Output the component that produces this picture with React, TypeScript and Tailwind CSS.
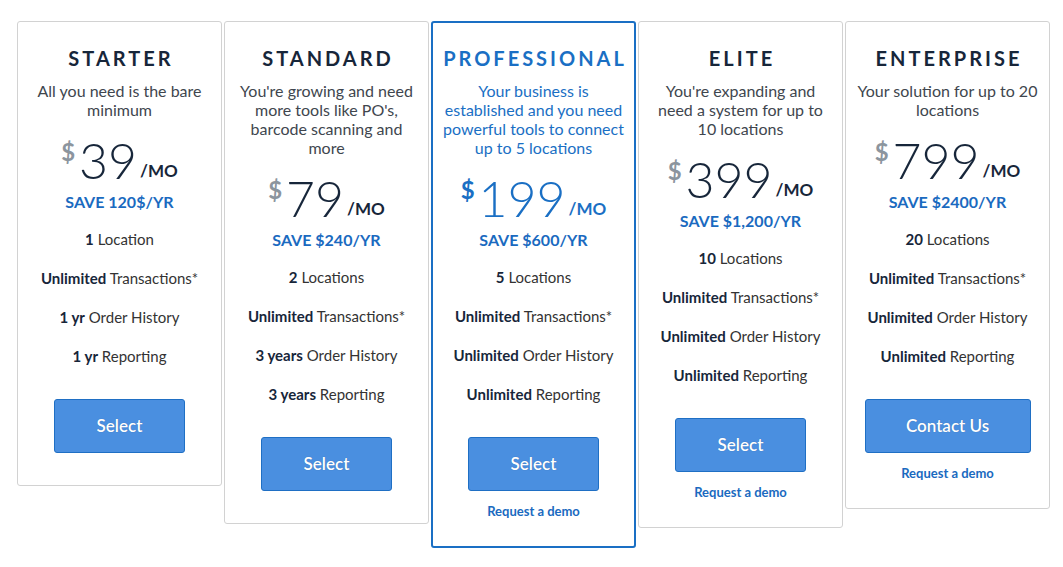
import React from "react";

type Feature = { b: string; r: string };
type Plan = {
  name: string;
  desc: string;
  price: string;
  save: string;
  features: Feature[];
  cta: string;
  btnW: string;
  demo: boolean;
  featured?: boolean;
};

const plans: Plan[] = [
  {
    name: "STARTER",
    desc: "All you need is the bare minimum",
    price: "39",
    save: "SAVE 120$/YR",
    features: [
      { b: "1", r: "Location" },
      { b: "Unlimited", r: "Transactions*" },
      { b: "1 yr", r: "Order History" },
      { b: "1 yr", r: "Reporting" },
    ],
    cta: "Select",
    btnW: "w-[131px]",
    demo: false,
  },
  {
    name: "STANDARD",
    desc: "You're growing and need more tools like PO's, barcode scanning and more",
    price: "79",
    save: "SAVE $240/YR",
    features: [
      { b: "2", r: "Locations" },
      { b: "Unlimited", r: "Transactions*" },
      { b: "3 years", r: "Order History" },
      { b: "3 years", r: "Reporting" },
    ],
    cta: "Select",
    btnW: "w-[131px]",
    demo: false,
  },
  {
    name: "PROFESSIONAL",
    desc: "Your business is established and you need powerful tools to connect up to 5 locations",
    price: "199",
    save: "SAVE $600/YR",
    features: [
      { b: "5", r: "Locations" },
      { b: "Unlimited", r: "Transactions*" },
      { b: "Unlimited", r: "Order History" },
      { b: "Unlimited", r: "Reporting" },
    ],
    cta: "Select",
    btnW: "w-[131px]",
    demo: true,
    featured: true,
  },
  {
    name: "ELITE",
    desc: "You're expanding and need a system for up to 10 locations",
    price: "399",
    save: "SAVE $1,200/YR",
    features: [
      { b: "10", r: "Locations" },
      { b: "Unlimited", r: "Transactions*" },
      { b: "Unlimited", r: "Order History" },
      { b: "Unlimited", r: "Reporting" },
    ],
    cta: "Select",
    btnW: "w-[131px]",
    demo: true,
  },
  {
    name: "ENTERPRISE",
    desc: "Your solution for up to 20 locations",
    price: "799",
    save: "SAVE $2400/YR",
    features: [
      { b: "20", r: "Locations" },
      { b: "Unlimited", r: "Transactions*" },
      { b: "Unlimited", r: "Order History" },
      { b: "Unlimited", r: "Reporting" },
    ],
    cta: "Contact Us",
    btnW: "w-[166px]",
    demo: true,
  },
];

function Card({ p }: { p: Plan }) {
  const f = p.featured;
  return (
    <div
      className={
        "w-[205px] shrink-0 flex flex-col items-center text-center bg-white rounded-[3px] " +
        (f
          ? "border-2 border-[#1a6fc4] pt-[23px] px-[9px]"
          : "border border-[#d2d2d2] pt-[24px] px-[10px]") +
        (p.demo ? " pb-[27px]" : " pb-[32px]")
      }
    >
      <div
        className={
          "text-[20px] leading-[24px] font-bold tracking-[3px] pl-[3px] whitespace-nowrap " +
          (f ? "text-[#1a6fc4]" : "text-[#17263a]")
        }
      >
        {p.name}
      </div>
      <div
        className={
          "mt-[11px] text-[16px] leading-[19px] " +
          (f ? "text-[#1a6fc4]" : "text-[#40464e]")
        }
      >
        {p.desc}
      </div>
      <div className="mt-[13px] flex items-start justify-center h-[56px]">
        <span
          className={
            "text-[24px] leading-[24px] font-bold mt-[8px] mr-[4px] " +
            (f ? "text-[#1a6fc4]" : "text-[#8c959e]")
          }
        >
          $
        </span>
        <span
          className={
            "text-[50px] leading-[56px] font-light " +
            (f ? "text-[#1a6fc4]" : "text-[#17263a]")
          }
        >
          {p.price}
        </span>
        <span
          className={
            "text-[17px] leading-[20px] font-bold ml-[3px] mt-[29px] " +
            (f ? "text-[#1a6fc4]" : "text-[#17263a]")
          }
        >
          /MO
        </span>
      </div>
      <div className="mt-[4px] text-[16px] leading-[20px] font-bold text-[#1a6ac0]">
        {p.save}
      </div>
      <div className="mt-[8px] flex flex-col">
        {p.features.map((x, i) => (
          <div
            key={i}
            className="h-[39px] flex items-center justify-center text-[15px] text-[#333] whitespace-nowrap"
          >
            <span className="font-bold text-[#17263a]">{x.b}</span>
            <span>&nbsp;{x.r}</span>
          </div>
        ))}
      </div>
      <button
        className={
          "mt-[23px] h-[54px] " +
          p.btnW +
          " rounded-[3px] bg-[#4a8fe0] border border-[#1f6fc4] text-white text-[17px] font-semibold [text-shadow:0_0_1px_rgba(0,0,0,0.25)]"
        }
      >
        {p.cta}
      </button>
      {p.demo && (
        <div className="mt-[12px] text-[13px] leading-[16px] font-bold text-[#1a6ac0]">
          Request a demo
        </div>
      )}
    </div>
  );
}

export default function App() {
  return (
    <div
      className="w-[1063px] h-[567px] bg-white overflow-hidden pl-[17px] pt-[21px] flex items-start gap-[2px]"
      style={{ fontFamily: "Lato, 'Open Sans', sans-serif" }}
    >
      {plans.map((p) => (
        <Card key={p.name} p={p} />
      ))}
    </div>
  );
}
